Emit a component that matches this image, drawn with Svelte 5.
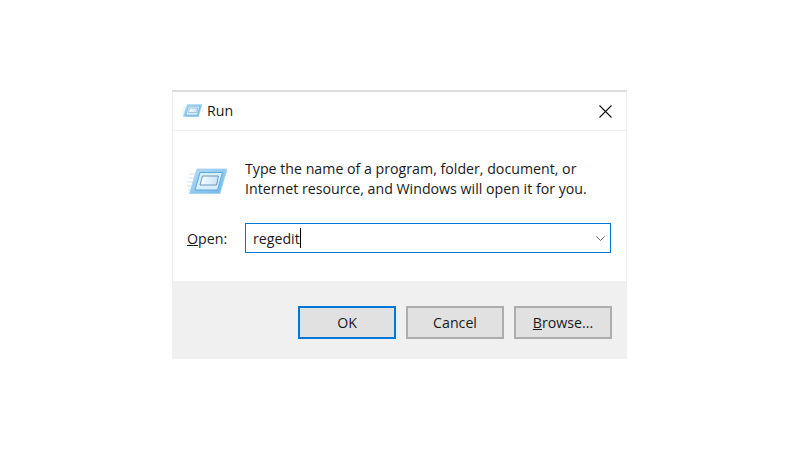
<script>
	let command = $state('regedit');
</script>

<div class="page">
	<div class="dialog">
		<header class="titlebar">
			<svg class="run-icon small" viewBox="0 0 40 26" aria-hidden="true">
				<use href="#run-glyph" />
			</svg>
			<span class="title">Run</span>
			<button class="close" aria-label="Close">
				<svg viewBox="0 0 13 13" width="13" height="13">
					<path d="M0.5 0.5 L12.5 12.5 M12.5 0.5 L0.5 12.5" stroke="#111" stroke-width="1.1" fill="none" />
				</svg>
			</button>
		</header>

		<main class="body">
			<div class="intro">
				<svg class="run-icon large" viewBox="0 0 40 26" aria-hidden="true">
					<defs>
						<linearGradient id="run-fill" x1="0" y1="0" x2="1" y2="1">
							<stop offset="0" stop-color="#b5dcf5" />
							<stop offset="1" stop-color="#6db8ea" />
						</linearGradient>
						<linearGradient id="run-slot" x1="0" y1="0" x2="1" y2="0">
							<stop offset="0" stop-color="#f6fbff" />
							<stop offset="1" stop-color="#c6e5f9" />
						</linearGradient>
						<g id="run-glyph">
							<path d="M2 6 H9 M1 10 H7 M0 14 H6 M0 18 H5 M1 22 H4" stroke="#d8ebf8" stroke-width="1.6" fill="none" />
							<path d="M10 1 H40 L33 25.5 H2.5 Z" fill="url(#run-fill)" stroke="#9fd0ee" stroke-width="0.8" />
							<path d="M13 4.5 H35.5 L30.5 22 H8 Z" fill="#d9eefb" stroke="#5aa9e0" stroke-width="1" />
							<path d="M15.5 8 H31.5 L29.5 17 H13 Z" fill="url(#run-slot)" stroke="#5b8fb5" stroke-width="0.9" />
						</g>
					</defs>
					<use href="#run-glyph" />
				</svg>
				<p>Type the name of a program, folder, document, or<br />Internet resource, and Windows will open it for you.</p>
			</div>

			<div class="open-row">
				<label for="cmd"><u>O</u>pen:</label>
				<div class="combo">
					<span class="value">{command}<span class="caret"></span></span>
					<input id="cmd" type="hidden" bind:value={command} />
					<svg class="chevron" viewBox="0 0 9 5" width="9" height="5" aria-hidden="true">
						<path d="M0.4 0.4 L4.5 4.5 L8.6 0.4" stroke="#555" stroke-width="0.9" fill="none" />
					</svg>
				</div>
			</div>
		</main>

		<footer class="actions">
			<button class="btn primary">OK</button>
			<button class="btn">Cancel</button>
			<button class="btn"><u>B</u>rowse...</button>
		</footer>
	</div>
</div>

<style>
	:global(body) {
		background: #fff;
	}

	.page {
		width: 800px;
		height: 450px;
		box-sizing: border-box;
		padding: 90px 0 0 172px;
		font-family: "Open Sans", "Noto Sans", sans-serif;
		color: #1a1a1a;
	}

	.dialog {
		width: 455px;
		height: 269px;
		box-sizing: border-box;
		display: flex;
		flex-direction: column;
		border-top: 2px solid #dcdcdc;
		border-left: 1px solid #ececec;
		border-right: 1px solid #ececec;
		background: #fff;
	}

	.titlebar {
		height: 38px;
		flex: none;
		display: flex;
		align-items: center;
		padding: 0 14px 0 9px;
		border-bottom: 1px solid #efefef;
	}

	.run-icon.small {
		width: 20px;
		height: 13px;
		margin-right: 5px;
		margin-top: -1px;
	}

	.title {
		font-size: 14.2px;
		line-height: 20px;
	}

	.close {
		margin-left: auto;
		padding: 0;
		border: none;
		background: none;
		display: flex;
	}

	.body {
		flex: 1;
		padding: 0 15px 0 14px;
	}

	.intro {
		display: flex;
		align-items: center;
		padding-top: 28px;
	}

	.run-icon.large {
		width: 40px;
		height: 26px;
		margin-right: 18px;
		margin-top: 3px;
		flex: none;
	}

	.intro p {
		margin: 0;
		font-size: 14.2px;
		line-height: 20px;
		white-space: nowrap;
	}

	.open-row {
		display: flex;
		align-items: center;
		margin-top: 24px;
	}

	label {
		width: 58px;
		font-size: 14.2px;
	}

	.combo {
		width: 366px;
		height: 30px;
		box-sizing: border-box;
		border: 1px solid #0078d7;
		display: flex;
		align-items: center;
		padding: 0 5px 0 7px;
		font-size: 14.2px;
	}

	.value {
		display: flex;
		align-items: center;
	}

	.caret {
		width: 1px;
		height: 20px;
		background: #000;
	}

	.chevron {
		margin-left: auto;
	}

	.actions {
		height: 78px;
		flex: none;
		box-sizing: border-box;
		margin: 0 -1px;
		background: #f0f0f0;
		display: flex;
		justify-content: flex-end;
		gap: 10px;
		padding: 25px 15px 0 0;
	}

	.btn {
		width: 98px;
		height: 33px;
		box-sizing: border-box;
		border: 2px solid #adadad;
		background: #e1e1e1;
		font: inherit;
		font-size: 14.2px;
		color: #1a1a1a;
		padding: 0;
	}

	.btn.primary {
		border: 2px solid #0078d7;
	}
</style>
